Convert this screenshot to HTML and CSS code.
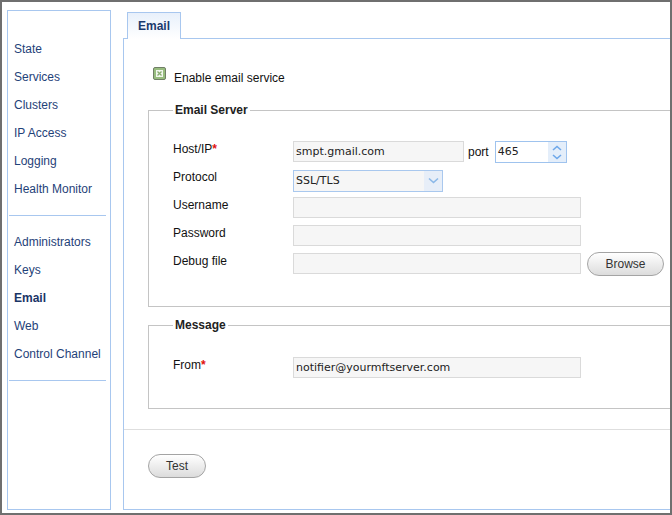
FILE: index.html
```html
<!DOCTYPE html>
<html lang="en">
<head>
  <meta charset="UTF-8">
  <title>Email settings</title>
  <link rel="stylesheet" href="styles.css">
</head>
<body>
  <div class="frame">
    <div class="sidebar">
      <ul class="nav">
        <li>State</li>
        <li>Services</li>
        <li>Clusters</li>
        <li>IP Access</li>
        <li>Logging</li>
        <li>Health Monitor</li>
      </ul>
      <div class="nav-sep"></div>
      <ul class="nav">
        <li>Administrators</li>
        <li>Keys</li>
        <li class="active">Email</li>
        <li>Web</li>
        <li>Control Channel</li>
      </ul>
      <div class="nav-sep"></div>
    </div>

    <div class="main">
      <div class="tabs">
        <div class="tab">Email</div>
      </div>
      <div class="panel">
        <div class="enable">
          <svg class="check" width="13" height="13" viewBox="0 0 13 13">
            <rect x="0.5" y="0.5" width="12" height="12" rx="1.5" fill="#98bd7f" stroke="#707f66"/>
            <rect x="3" y="3" width="7" height="7" fill="#f2f7ee"/>
            <path d="M4.5 4.5l4 4M8.5 4.5l-4 4" stroke="#86ab6d" stroke-width="1.3"/>
          </svg>
          <span class="enable-text">Enable email service</span>
        </div>

        <fieldset class="group">
          <legend>Email Server</legend>
          <div class="form">
            <div class="lbl">Host/IP<span class="req">*</span></div>
            <div class="fld">
              <input class="text host" value="smpt.gmail.com">
              <span class="port">port</span>
              <div class="spin">
                <span class="val">465</span>
                <span class="btns">
                  <svg width="10" height="6" viewBox="0 0 10 6"><polyline points="1,5 5,1.5 9,5" fill="none" stroke="#6ea8ea" stroke-width="1.6"/></svg>
                  <svg width="10" height="6" viewBox="0 0 10 6"><polyline points="1,1 5,4.5 9,1" fill="none" stroke="#6ea8ea" stroke-width="1.6"/></svg>
                </span>
              </div>
            </div>

            <div class="lbl">Protocol</div>
            <div class="fld">
              <div class="select">
                <span class="val">SSL/TLS</span>
                <span class="arrow">
                  <svg width="11" height="7" viewBox="0 0 11 7"><polyline points="1,1.5 5.5,5.5 10,1.5" fill="none" stroke="#8bb8e8" stroke-width="1.6"/></svg>
                </span>
              </div>
            </div>

            <div class="lbl">Username</div>
            <div class="fld"><input class="text wide" value=""></div>

            <div class="lbl">Password</div>
            <div class="fld"><input class="text wide" type="password" value=""></div>

            <div class="lbl">Debug file</div>
            <div class="fld">
              <input class="text wide" value="">
              <button class="pill browse">Browse</button>
            </div>
          </div>
        </fieldset>

        <fieldset class="group msg">
          <legend>Message</legend>
          <div class="form">
            <div class="lbl">From<span class="req">*</span></div>
            <div class="fld"><input class="text wide" value="notifier@yourmftserver.com"></div>
          </div>
        </fieldset>

        <div class="footer">
          <button class="pill test">Test</button>
        </div>
      </div>
    </div>
  </div>
</body>
</html>
```

FILE: styles.css
```css
body {
  margin: 0;
  background: #fff;
  font-family: "Liberation Sans", Arial, sans-serif;
  font-size: 12px;
  color: #111;
}

.frame {
  display: flex;
  width: 672px;
  height: 515px;
  box-sizing: border-box;
  border: 2px solid #6f6f6f;
  overflow: hidden;
  background: #fff;
}

/* left menu */
.sidebar {
  flex: none;
  width: 104px;
  height: 500px;
  box-sizing: border-box;
  margin: 8px 0 0 5px;
  padding-top: 24px;
  border: 1px solid #a8c7ef;
}

.nav {
  list-style: none;
  margin: 0;
  padding: 0 0 0 6px;
}

.nav li {
  height: 28px;
  line-height: 28px;
  color: #1f4279;
  white-space: nowrap;
}

.nav li.active {
  font-weight: bold;
  color: #1a3566;
}

.nav-sep {
  height: 1px;
  background: #a8c7ef;
  margin: 12px 4px 12px 1px;
}

/* main panel */
.main {
  flex: none;
  display: flex;
  flex-direction: column;
  width: 600px;
  height: 498px;
  margin: 10px 0 0 12px;
}

.tabs {
  display: flex;
  height: 26px;
  padding-left: 4px;
}

.tab {
  position: relative;
  z-index: 1;
  height: 27px;
  box-sizing: border-box;
  padding: 0 10px;
  border: 1px solid #a8c7ef;
  border-bottom: none;
  background: linear-gradient(#e8f0fb, #fff);
  line-height: 26px;
  font-weight: bold;
  color: #1b3a6c;
}

.panel {
  flex: 1;
  box-sizing: border-box;
  border: 1px solid #a8c7ef;
  padding-top: 28px;
}

.enable {
  display: flex;
  align-items: flex-start;
  height: 16px;
  margin-left: 29px;
}

.enable-text {
  margin-left: 8px;
  padding-top: 4px;
  line-height: 15px;
  color: #111;
}

.group {
  margin: 20px 24px 0;
  padding: 24px 0 32px 24px;
  border: 1px solid #c4c4c4;
  min-width: 0;
}

.group legend {
  padding: 0 2px;
  line-height: 14px;
  font-weight: bold;
  color: #222;
}

.group.msg {
  margin-top: 11px;
  padding: 25px 0 30px 24px;
}

.form {
  display: grid;
  grid-template-columns: 120px auto;
  grid-auto-rows: 21px;
  row-gap: 7px;
  align-items: start;
}

.lbl {
  padding-top: 1px;
  line-height: 15px;
  color: #111;
}

.req {
  color: #e01010;
  font-weight: bold;
}

.fld {
  display: flex;
  align-items: center;
  height: 21px;
}

.text {
  box-sizing: border-box;
  height: 21px;
  margin: 0;
  padding: 0 2px;
  border: 1px solid #dadada;
  background: #f6f6f6;
  font-family: "DejaVu Sans", Verdana, sans-serif;
  font-size: 11px;
  color: #222;
  outline: none;
}

.host { width: 171px; }
.wide { width: 288px; }

.port {
  margin: 0 6px 0 4px;
  color: #111;
}

.spin {
  display: flex;
  width: 72px;
  height: 22px;
  box-sizing: border-box;
  margin-top: 1px;
  border: 1px solid #9fc3ee;
  background: #fff;
}

.spin .val,
.select .val {
  flex: 1;
  padding-left: 2px;
  line-height: 20px;
  font-family: "DejaVu Sans", Verdana, sans-serif;
  font-size: 11px;
  color: #222;
}

.spin .btns {
  display: flex;
  flex-direction: column;
  align-items: center;
  justify-content: center;
  gap: 3px;
  width: 18px;
  background: #e4eefa;
}

.select {
  display: flex;
  width: 150px;
  height: 22px;
  box-sizing: border-box;
  margin-top: 2px;
  border: 1px solid #a9c8ee;
  background: #f6f6f6;
}

.select .arrow {
  display: flex;
  align-items: center;
  justify-content: center;
  width: 18px;
  background: #e7eef8;
}

.pill {
  height: 24px;
  box-sizing: border-box;
  margin: 0;
  padding: 0;
  border: 1px solid #a4a4a4;
  border-radius: 12px;
  background: linear-gradient(#ffffff, #dcdcdc);
  font-family: "Liberation Sans", Arial, sans-serif;
  font-size: 12px;
  color: #333;
}

.browse {
  width: 77px;
  margin-left: 6px;
}

.test {
  width: 58px;
}

.footer {
  margin-top: 20px;
  padding: 24px 0 0 24px;
  border-top: 1px solid #dedede;
}
```
